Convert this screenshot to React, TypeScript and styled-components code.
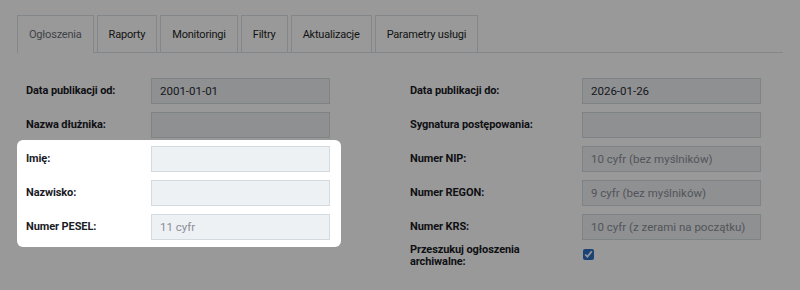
import React from 'react'
import styled, { createGlobalStyle } from 'styled-components'

const Global = createGlobalStyle`
  html, body {
    margin: 0;
    padding: 0;
    background: #fff;
    font-family: Roboto, "Liberation Sans", sans-serif;
    color: #1c1c28;
  }
`

const Page = styled.div`
  width: 800px;
  height: 290px;
  box-sizing: border-box;
  padding: 15px 17px 0 17px;
  overflow: hidden;
`

const Tabs = styled.ul`
  display: flex;
  gap: 3px;
  list-style: none;
  margin: 0;
  padding: 0;
  border-bottom: 1px solid #dde1e5;
`

const Tab = styled.li<{ $active?: boolean }>`
  box-sizing: border-box;
  padding: 0 11px;
  display: flex;
  align-items: center;
  font-size: 11px;
  letter-spacing: -0.2px;
  color: ${p => (p.$active ? '#6b7078' : '#1e1f24')};
  border: 1px solid #dde1e5;
  border-bottom: none;
  background: #fff;
  margin-bottom: ${p => (p.$active ? '-1px' : '0')};
  height: ${p => (p.$active ? '38px' : '37px')};
`

const Form = styled.div`
  display: flex;
  padding: 25px 0 0 9px;
  gap: 80px;
`

const Column = styled.div<{ $label: number }>`
  display: flex;
  flex-direction: column;
  gap: 8px;
  --label: ${p => p.$label}px;
`

const Row = styled.div`
  display: flex;
  align-items: center;
  height: 26px;
`

const CheckRow = styled.div`
  display: flex;
  align-items: flex-start;
  margin-top: -4px;
`

const Label = styled.label<{ $width?: number }>`
  width: ${p => (p.$width ? `${p.$width}px` : 'var(--label)')};
  flex: none;
  font-size: 11px;
  font-weight: 700;
  letter-spacing: -0.1px;
  line-height: 12px;
  color: #1a1b26;
  padding-right: 10px;
  box-sizing: border-box;
`

const Input = styled.input`
  width: 179px;
  height: 26px;
  box-sizing: border-box;
  border: 1px solid #d3dae0;
  background: #eef1f4;
  padding: 0 8px;
  font-family: inherit;
  font-size: 11.5px;
  color: #2a2b33;
  border-radius: 0;
  outline: none;
  &::placeholder {
    color: #8a8e96;
  }
`

const Check = styled.input`
  margin: 5px 0 0 23px;
  width: 11px;
  height: 11px;
  accent-color: #2d6ec4;
`

const Spotlight = styled.div`
  position: relative;
  z-index: 2;
  display: flex;
  flex-direction: column;
  gap: 8px;
  margin: -6px -11px -7px -9px;
  padding: 6px 11px 7px 9px;
  background: #fff;
  border-radius: 6px;
  box-shadow: 0 0 0 2000px rgba(0, 0, 0, 0.4);
`

type FieldProps = { label: string; value?: string; placeholder?: string }

const Field = ({ label, value, placeholder }: FieldProps) => (
  <Row>
    <Label>{label}</Label>
    <Input defaultValue={value} placeholder={placeholder} />
  </Row>
)

export default function App() {
  const tabs = ['Ogłoszenia', 'Raporty', 'Monitoringi', 'Filtry', 'Aktualizacje', 'Parametry usługi']
  return (
    <Page>
      <Global />
      <Tabs>
        {tabs.map((t, i) => (
          <Tab key={t} $active={i === 0}>
            {t}
          </Tab>
        ))}
      </Tabs>
      <Form>
        <Column $label={125}>
          <Field label="Data publikacji od:" value="2001-01-01" />
          <Field label="Nazwa dłużnika:" />
          <Spotlight>
            <Field label="Imię:" />
            <Field label="Nazwisko:" />
            <Field label="Numer PESEL:" placeholder="11 cyfr" />
          </Spotlight>
        </Column>
        <Column $label={172}>
          <Field label="Data publikacji do:" value="2026-01-26" />
          <Field label="Sygnatura postępowania:" />
          <Field label="Numer NIP:" placeholder="10 cyfr (bez myślników)" />
          <Field label="Numer REGON:" placeholder="9 cyfr (bez myślników)" />
          <Field label="Numer KRS:" placeholder="10 cyfr (z zerami na początku)" />
          <CheckRow>
            <Label $width={150}>Przeszukuj ogłoszenia archiwalne:</Label>
            <Check type="checkbox" defaultChecked />
          </CheckRow>
        </Column>
      </Form>
    </Page>
  )
}
